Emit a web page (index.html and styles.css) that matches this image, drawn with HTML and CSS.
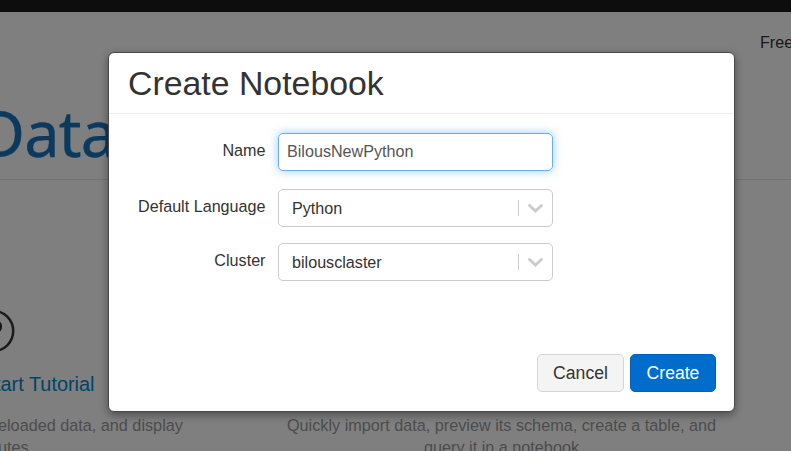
FILE: index.html
```
<!DOCTYPE html>
<html lang="en">
<head>
<meta charset="utf-8">
<title>Create Notebook</title>
<link rel="stylesheet" href="styles.css">
</head>
<body>
<div class="page">
  <div class="topbar"></div>
  <div class="trial">Free</div>
  <div class="hero"><span class="brand">Data</span></div>
  <div class="cards">
    <section class="card card-left">
      <svg class="card-icon" width="75" height="48" viewBox="0 0 75 48"><circle cx="53" cy="24" r="20.2" fill="none" stroke="#353535" stroke-width="2.5"/><ellipse cx="58" cy="19.5" rx="4" ry="5.5" fill="#33261f"/></svg>
      <h3 class="card-title">tart Tutorial</h3>
      <p class="card-text">eloaded data, and display<br>utes</p>
    </section>
    <section class="card card-mid">
      <p class="card-text">Quickly import data, preview its schema, create a table, and<br>query it in a notebook</p>
    </section>
  </div>
</div>
<div class="overlay">
  <div class="modal">
    <header class="modal-head"><h1 class="title">Create Notebook</h1></header>
    <form class="form">
      <label class="label">Name</label>
      <div class="field field-focus">BilousNewPython</div>
      <label class="label">Default Language</label>
      <div class="field select"><span>Python</span><i class="sep"></i><svg width="20" height="20" viewBox="0 0 20 20"><path d="M4.5 7.5 10.5 13l6-5.5" fill="none" stroke="#ccc" stroke-width="3" stroke-linecap="round"/></svg></div>
      <label class="label">Cluster</label>
      <div class="field select"><span>bilousclaster</span><i class="sep"></i><svg width="20" height="20" viewBox="0 0 20 20"><path d="M4.5 7.5 10.5 13l6-5.5" fill="none" stroke="#ccc" stroke-width="3" stroke-linecap="round"/></svg></div>
    </form>
    <footer class="actions">
      <button class="btn" type="button">Cancel</button>
      <button class="btn btn-primary" type="button">Create</button>
    </footer>
  </div>
</div>
</body>
</html>
```
FILE: styles.css
```
* { box-sizing: border-box; }
body {
  margin: 0;
  width: 791px;
  height: 451px;
  overflow: hidden;
  background: #fff;
  color: #333;
  font: 16.15px/22px "Liberation Sans", Arial, sans-serif;
}
h1, h3, p { margin: 0; font-weight: 400; }
.page { height: 451px; overflow: hidden; }
.topbar { height: 12px; background: #1b1b1b; }
.trial { height: 60px; padding: 19px 0 0 760px; white-space: nowrap; }
.hero {
  display: flex;
  height: 108px;
  border-bottom: 1px solid #e6e6e6;
}
.brand {
  margin-left: -21px;
  padding-top: 17px;
  font: 63px/88px "Noto Sans", "Open Sans", sans-serif;
  letter-spacing: -.8px;
  color: #1774bd;
  -webkit-text-stroke: .4px #1774bd;
}
.cards { display: flex; padding-top: 127px; }
.card { flex: none; }
.card-left { width: 183px; }
.card-icon { display: block; margin-left: -60px; }
.card-title {
  padding-top: 16px;
  margin-left: -5px;
  font-size: 19.9px;
  line-height: 26px;
  color: #0088cc;
}
.card-text {
  font-size: 16.23px;
  line-height: 22px;
  color: #999;
  white-space: nowrap;
}
.card-left .card-text { margin: 17px 0 0 -2px; }
.card-mid { width: 430px; margin: 107px 0 0 103.5px; text-align: center; }
.overlay {
  position: absolute;
  inset: 0;
  padding: 52px 0 0 108px;
  background: rgba(0, 0, 0, .5);
}
.modal {
  width: 627px;
  height: 360px;
  border: 1px solid #484848;
  border-radius: 6px;
  background: #fff;
  box-shadow: 0 3px 8px rgba(0, 0, 0, .4);
}
.modal-head { height: 61px; padding: 10px 19px; border-bottom: 1px solid #eee; }
.title { font-size: 33.85px; line-height: 40px; }
.form {
  display: grid;
  grid-template-columns: 156.5px 275px;
  grid-template-rows: 40px 38px 38px;
  gap: 16px 12.5px;
  padding-top: 19px;
}
.label { padding-top: 6px; text-align: right; }
.field {
  display: flex;
  align-items: center;
  height: 38px;
  padding: 0 7px 0 13px;
  border: 1px solid #ccc;
  border-radius: 5px;
}
.field span { flex: 1; padding-bottom: 1px; }
.field-focus {
  padding: 0 8px 2px;
  border-color: #66afe9;
  color: #555;
  box-shadow: 0 0 10px rgba(82, 168, 236, .6);
}
.sep { width: 1px; height: 16px; margin-right: 6px; background: #ccc; }
.actions { display: flex; justify-content: flex-end; gap: 6px; padding: 73px 18px 0; }
.btn {
  width: 87px;
  height: 38px;
  padding: 0;
  border: 1px solid #d5d5d5;
  border-radius: 5px;
  background: #f4f4f4;
  color: #333;
  font: 17.6px "Liberation Sans", Arial, sans-serif;
}
.btn-primary { width: 86px; border-color: #0062c0; background: #006dcc; color: #fff; }
```
